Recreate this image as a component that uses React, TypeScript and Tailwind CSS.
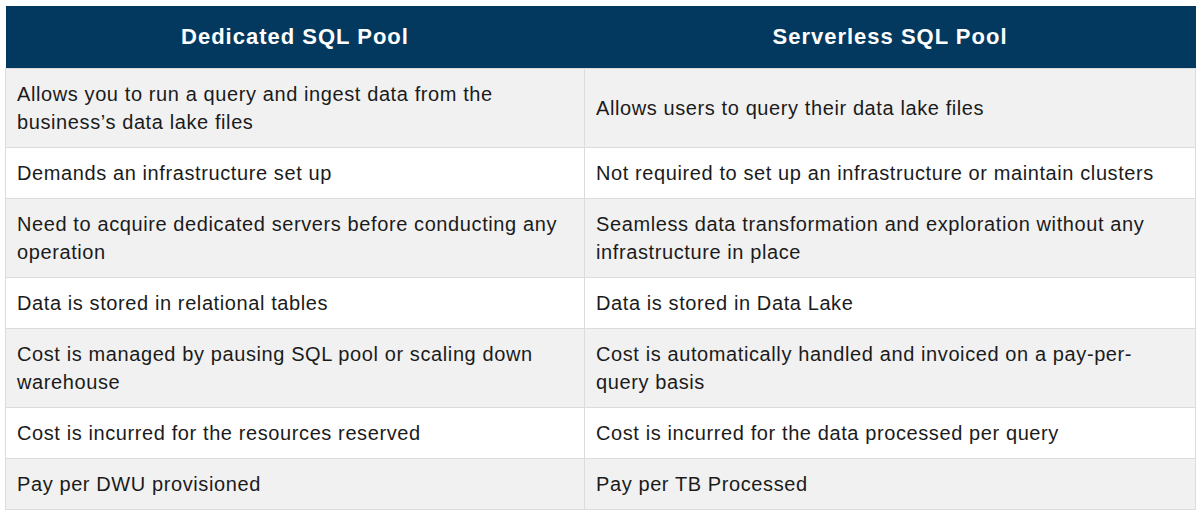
const ROWS: [string, string][] = [
  ["Allows you to run a query and ingest data from the business’s data lake files", "Allows users to query their data lake files"],
  ["Demands an infrastructure set up", "Not required to set up an infrastructure or maintain clusters"],
  ["Need to acquire dedicated servers before conducting any operation", "Seamless data transformation and exploration without any infrastructure in place"],
  ["Data is stored in relational tables", "Data is stored in Data Lake"],
  ["Cost is managed by pausing SQL pool or scaling down warehouse", "Cost is automatically handled and invoiced on a pay-per-query basis"],
  ["Cost is incurred for the resources reserved", "Cost is incurred for the data processed per query"],
  ["Pay per DWU provisioned", "Pay per TB Processed"],
];

export default function App() {
  return (
    <div className="w-[1200px] h-[522px] bg-white pt-[6px] pl-[5px]" style={{ fontFamily: '"Liberation Sans", Arial, sans-serif' }}>
      <table className="w-[1190px] border-collapse table-fixed">
        <colgroup>
          <col className="w-[579px]" />
          <col className="w-[611px]" />
        </colgroup>
        <thead>
          <tr className="bg-[#04395f] h-[62px]">
            <th className="text-white font-bold text-[22px] tracking-[1px] text-center">Dedicated SQL Pool</th>
            <th className="text-white font-bold text-[22px] tracking-[1px] text-center">Serverless SQL Pool</th>
          </tr>
        </thead>
        <tbody>
          {ROWS.map(([a, b], i) => (
            <tr key={i} className={i % 2 === 0 ? "bg-[#f1f1f1]" : "bg-white"}>
              <td className="border border-[#dcdcdc] px-[11px] py-[11px] text-[20px] tracking-[0.6px] leading-[28px] text-[#1b1b1b] align-middle">{a}</td>
              <td className="border border-[#dcdcdc] px-[11px] py-[11px] text-[20px] tracking-[0.6px] leading-[28px] text-[#1b1b1b] align-middle">{b}</td>
            </tr>
          ))}
        </tbody>
      </table>
    </div>
  );
}
